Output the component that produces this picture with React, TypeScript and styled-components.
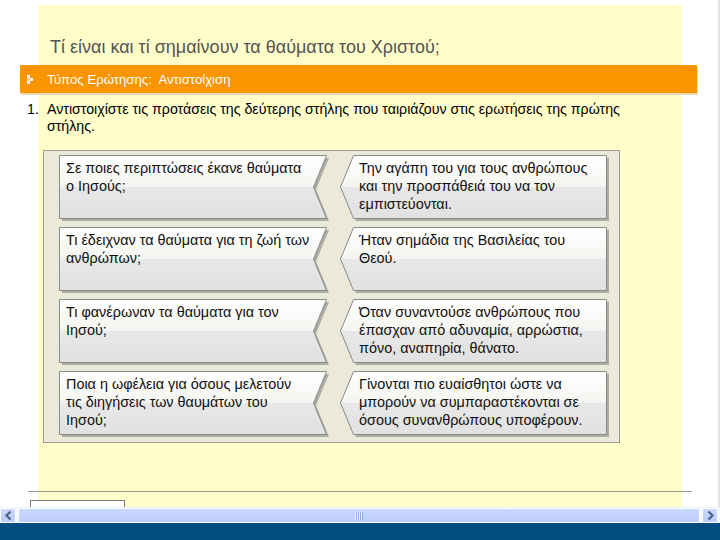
import React from "react";
import styled, { createGlobalStyle } from "styled-components";

const GlobalStyle = createGlobalStyle`
  html, body {
    margin: 0;
    padding: 0;
    background: #ffffff;
  }
  body {
    font-family: "Liberation Sans", Arial, sans-serif;
  }
`;

const Screen = styled.div`
  width: 720px;
  height: 540px;
  overflow: hidden;
  display: flex;
  flex-direction: column;
`;

const Viewport = styled.div`
  height: 507px;
  flex: none;
  overflow: hidden;
  box-sizing: border-box;
  border-right: 2px solid #e4e4e4;
  background: linear-gradient(#fffecb, #fffecb) 38px 5px / 644px 100% no-repeat, #ffffff;
`;

const Title = styled.h1`
  margin: 0;
  padding: 37px 0 0 50px;
  font-size: 18px;
  line-height: 20px;
  font-weight: normal;
  color: #555555;
`;

const TypeBar = styled.div`
  margin: 8px 0 0 20px;
  width: 677px;
  height: 28px;
  display: flex;
  align-items: center;
  gap: 12px;
  padding-left: 7px;
  box-sizing: border-box;
  background: #f89500;
  box-shadow: 1px 2px 0 #eadcae;
  color: #ffffff;
  font-size: 13.2px;
`;

const Question = styled.div`
  margin: 8px 0 0 27px;
  display: flex;
  font-size: 14.2px;
  line-height: 17px;
  color: #000000;
`;

const QuestionNum = styled.span`
  width: 20px;
  flex: none;
`;

const QuestionText = styled.span`
  width: 582px;
`;

const MatchBox = styled.div`
  margin: 15px 0 0 43px;
  width: 577px;
  height: 293px;
  box-sizing: border-box;
  border: 1px solid #9c9c94;
  background: #ebe9d8;
  padding: 4px 0 0 15px;
  display: grid;
  grid-template-columns: 268px 267px;
  grid-auto-rows: 64px;
  column-gap: 13px;
  row-gap: 8px;
`;

const Card = styled.div<{ $side: "left" | "right" }>`
  position: relative;
  height: 64px;
  padding: ${(p) => (p.$side === "left" ? "4px 0 0 7px" : "4px 0 0 19px")};
  box-sizing: border-box;
  font-size: 14.4px;
  line-height: 18px;
  color: #111111;
`;

const CardShape = styled.svg`
  position: absolute;
  left: 0;
  top: 0;
  z-index: 0;
`;

const CardLine = styled.div`
  position: relative;
  z-index: 1;
  white-space: nowrap;
`;

const FooterRule = styled.div`
  margin: 48px 0 0 28px;
  width: 664px;
  height: 1px;
  background: #9a9a9a;
`;

const ActionButton = styled.div`
  margin: 8px 0 0 30px;
  width: 95px;
  height: 22px;
  box-sizing: border-box;
  border: 1px solid #7a7a7a;
  background: #ffffff;
`;

const ScrollBar = styled.div`
  height: 16px;
  flex: none;
  display: flex;
  gap: 1px;
  background: #f3f6fd;
  border-top: 1px solid #eef2fb;
  box-sizing: border-box;
  padding-right: 2px;
`;

const ScrollButton = styled.div`
  width: 16px;
  flex: none;
  display: flex;
  align-items: center;
  justify-content: center;
  box-sizing: border-box;
  border: 1px solid #ffffff;
  border-radius: 2px;
  background: linear-gradient(#cddafd, #b8cbf8);
`;

const ScrollThumb = styled.div`
  flex: 1;
  margin: 0 1px;
  display: flex;
  align-items: center;
  justify-content: center;
  box-sizing: border-box;
  border: 1px solid #ffffff;
  border-radius: 2px;
  background: linear-gradient(#cad9fe, #bccff9);
`;

const Taskbar = styled.div`
  height: 17px;
  flex: none;
  background: #034c80;
`;

type Row = { left: string[]; right: string[] };

const rows: Row[] = [
  {
    left: ["Σε ποιες περιπτώσεις έκανε θαύματα", "ο Ιησούς;"],
    right: ["Την αγάπη του για τους ανθρώπους", "και την προσπάθειά του να τον", "εμπιστεύονται."],
  },
  {
    left: ["Τι έδειχναν τα θαύματα για τη ζωή των", "ανθρώπων;"],
    right: ["Ήταν σημάδια της Βασιλείας του", "Θεού."],
  },
  {
    left: ["Τι φανέρωναν τα θαύματα για τον", "Ιησού;"],
    right: ["Όταν συναντούσε ανθρώπους που", "έπασχαν από αδυναμία, αρρώστια,", "πόνο, αναπηρία, θάνατο."],
  },
  {
    left: ["Ποια η ωφέλεια για όσους μελετούν", "τις διηγήσεις των θαυμάτων του", "Ιησού;"],
    right: ["Γίνονται πιο ευαίσθητοι ώστε να", "μπορούν να συμπαραστέκονται σε", "όσους συνανθρώπους υποφέρουν."],
  },
];

function PieceShape({ side }: { side: "left" | "right" }) {
  const pts =
    side === "left"
      ? "0.5,0.5 267.5,0.5 254.5,32 267.5,63.5 0.5,63.5"
      : "13.5,0.5 266.5,0.5 266.5,63.5 13.5,63.5 0.5,32";
  const id = `g-${side}`;
  return (
    <CardShape width="271" height="67" viewBox="0 0 271 67">
      <defs>
        <linearGradient id={id} x1="0" y1="0" x2="0" y2="1">
          <stop offset="0" stopColor="#ffffff" />
          <stop offset="0.5" stopColor="#f4f4f0" />
          <stop offset="0.5" stopColor="#e8e8e8" />
          <stop offset="1" stopColor="#e1e1e1" />
        </linearGradient>
      </defs>
      <polygon points={pts} transform="translate(2.5 2.5)" fill="#acaca5" />
      <polygon points={pts} fill={`url(#${id})`} stroke="#8a8a8a" strokeWidth="1" />
    </CardShape>
  );
}

function Piece({ side, lines }: { side: "left" | "right"; lines: string[] }) {
  return (
    <Card $side={side}>
      <PieceShape side={side} />
      {lines.map((l, i) => (
        <CardLine key={i}>{l}</CardLine>
      ))}
    </Card>
  );
}

function BarIcon() {
  return (
    <svg width="8" height="9" viewBox="0 0 8 9">
      <rect x="0" y="0" width="3" height="3" fill="#ffffff" opacity="0.95" />
      <rect x="0" y="3" width="3" height="3" fill="#ffffff" opacity="0.55" />
      <rect x="3" y="3" width="3" height="3" fill="#ffffff" />
      <rect x="0" y="6" width="3" height="3" fill="#ffffff" opacity="0.95" />
    </svg>
  );
}

function Chevron({ dir }: { dir: "left" | "right" }) {
  const d = dir === "left" ? "M6.5 1.5 L2.5 5.5 L6.5 9.5" : "M2.5 1.5 L6.5 5.5 L2.5 9.5";
  return (
    <svg width="9" height="11" viewBox="0 0 9 11">
      <path d={d} fill="none" stroke="#4d6185" strokeWidth="2.2" />
    </svg>
  );
}

function Grip() {
  return (
    <svg width="8" height="8" viewBox="0 0 8 8">
      {[0, 2, 4, 6].map((x) => (
        <rect key={x} x={x} y="0" width="1" height="8" fill="#eef3ff" />
      ))}
      {[1, 3, 5, 7].map((x) => (
        <rect key={x} x={x} y="0" width="1" height="8" fill="#8ca6e6" />
      ))}
    </svg>
  );
}

export default function App() {
  return (
    <Screen>
      <GlobalStyle />
      <Viewport>
        <Title>Τί είναι και τί σημαίνουν τα θαύματα του Χριστού;</Title>
        <TypeBar>
          <BarIcon />
          <span>Τύπος Ερώτησης:&nbsp; Αντιστοίχιση</span>
        </TypeBar>
        <Question>
          <QuestionNum>1.</QuestionNum>
          <QuestionText>
            Αντιστοιχίστε τις προτάσεις της δεύτερης στήλης που ταιριάζουν στις ερωτήσεις της πρώτης στήλης.
          </QuestionText>
        </Question>
        <MatchBox>
          {rows.map((r, i) => (
            <React.Fragment key={i}>
              <Piece side="left" lines={r.left} />
              <Piece side="right" lines={r.right} />
            </React.Fragment>
          ))}
        </MatchBox>
        <FooterRule />
        <ActionButton />
      </Viewport>
      <ScrollBar>
        <ScrollButton>
          <Chevron dir="left" />
        </ScrollButton>
        <ScrollThumb>
          <Grip />
        </ScrollThumb>
        <ScrollButton>
          <Chevron dir="right" />
        </ScrollButton>
      </ScrollBar>
      <Taskbar />
    </Screen>
  );
}
